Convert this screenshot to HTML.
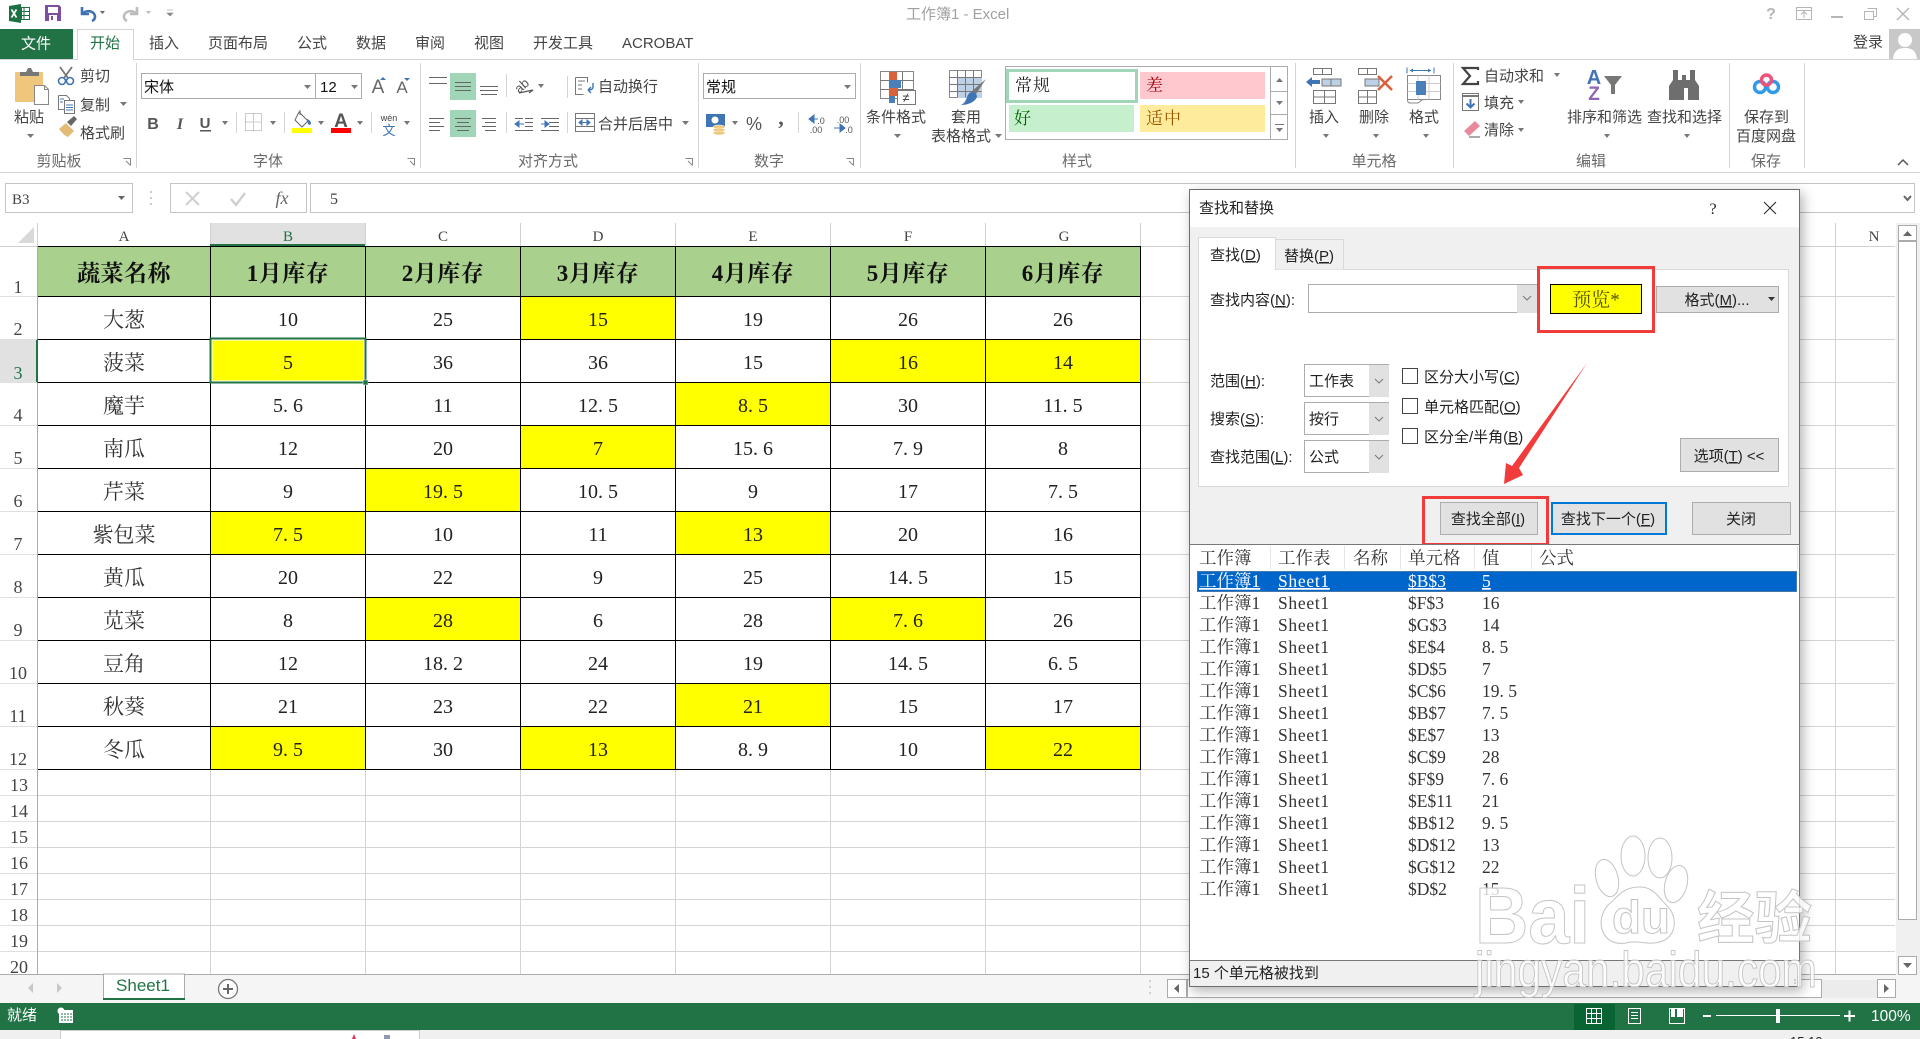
<!DOCTYPE html>
<html lang="zh-CN"><head><meta charset="utf-8"><title>工作簿1 - Excel</title>
<style>
html,body{margin:0;padding:0;background:#fff;width:1920px;height:1039px;overflow:hidden}
svg{display:block;position:absolute;left:0;top:0}
text{white-space:pre}
.r{font:15px "Liberation Sans","Noto Sans CJK SC",sans-serif;fill:#444}
.g{font:15px "Liberation Sans","Noto Sans CJK SC",sans-serif;fill:#6a6a6a}
.d{font:15px "Liberation Sans","Noto Sans CJK SC",sans-serif;fill:#222}
.m{text-anchor:middle}
.h{font:bold 23px "Liberation Serif","Noto Serif CJK SC",serif;fill:#111;text-anchor:middle;letter-spacing:.5px}
.c{font:20px "Liberation Serif","Noto Serif CJK SC",serif;fill:#222;text-anchor:middle}
.z{font:21px "Liberation Serif","Noto Serif CJK SC",serif;fill:#333;text-anchor:middle}
.n{font:18px "Liberation Serif",serif;fill:#444;text-anchor:middle}
.l{font:15px "Liberation Serif",serif;fill:#444;text-anchor:middle}
.v{font:17.5px "Liberation Serif","Noto Serif CJK SC",serif;fill:#333}
.vs{font:17.5px "Liberation Serif","Noto Serif CJK SC",serif;fill:#fff;text-decoration:underline}
.sh{letter-spacing:.7px}
.ln{fill:none;stroke:#d4d4d4;stroke-width:1}
.i{fill:none;stroke:#777;stroke-width:1}
</style></head><body>
<svg width="1920" height="1039" viewBox="0 0 1920 1039" xmlns="http://www.w3.org/2000/svg">
<defs><filter id="ds" x="-5%" y="-5%" width="112%" height="112%"><feDropShadow dx="3" dy="4" stdDeviation="6" flood-color="#000" flood-opacity=".3"/></filter></defs>
<rect width="1920" height="1039" fill="#fff"/>

<!-- Title bar -->
<path d="M9 6l12-2v19l-12-2z" fill="#1d7044"/><rect x="21.500" y="7.500" width="8" height="12" fill="#fff" stroke="#1d7044"/>
<path d="M24 7.500v12M21.500 11.500h8M21.500 15.500h8" stroke="#1d7044" fill="none"/>
<path d="M11.500 9.500l5 8M16.500 9.500l-5 8" stroke="#fff" stroke-width="1.700" fill="none"/>
<path d="M45 5h14l2 2v14h-16z" fill="#7d4f9e"/><rect x="48" y="7" width="10" height="6" fill="#fff"/><rect x="49" y="15" width="8" height="6" fill="#fff"/><rect x="51" y="16" width="2" height="4" fill="#7d4f9e"/>
<path d="M82 7v7h7" fill="none" stroke="#3e72b4" stroke-width="2.600"/><path d="M82 14c5-5 13-3 13 3 0 2-1 3-3 4" fill="none" stroke="#3e72b4" stroke-width="2.600"/>
<path d="M100 11h5l-2.500 3z" fill="#666"/>
<path d="M137 7v7h-7" fill="none" stroke="#bdbdbd" stroke-width="2.600"/><path d="M137 14c-5-5-13-3-13 3 0 2 1 3 3 4" fill="none" stroke="#bdbdbd" stroke-width="2.600"/>
<path d="M146 11h5l-2.500 3z" fill="#bbb"/><path d="M167 10h6M167 13h6l-3 3z" fill="#888" stroke="#888" stroke-width=".6"/>
<text x="906" y="19" class="r" style="fill:#a0a0a0;font-size:15px">工作簿1 - Excel</text>
<text x="1771" y="19" class="r m" style="fill:#b5b5b5;font-size:16px;font-weight:bold">?</text>
<path d="M1796.500 7.500h15v12h-15zM1796.500 10.500h15M1804 18v-6M1801 14.500l3-3 3 3" class="i" style="stroke:#b5b5b5"/>
<rect x="1831" y="16" width="12" height="2" fill="#b5b5b5"/>
<path d="M1867.500 8.500h9v8h-3M1864.500 11.500h9v8h-9z" fill="none" stroke="#b5b5b5"/>
<path d="M1897 8l12 12M1909 8l-12 12" stroke="#b5b5b5" stroke-width="1.400" fill="none"/>

<!-- Tabs -->
<path d="M0 59.500h1920" class="ln"/>
<rect x="0" y="29" width="73" height="30" fill="#217346"/>
<text x="36" y="48.500" class="m" style="font:15px 'Noto Sans CJK SC',sans-serif;fill:#fff">文件</text>
<path d="M77.500 60v-30.500h56v30.500" fill="#fff" stroke="#d4d4d4"/>
<text x="105" y="48" class="r m" style="fill:#217346">开始</text>
<text x="164" y="48" class="r m">插入</text><text x="238" y="48" class="r m">页面布局</text>
<text x="312" y="48" class="r m">公式</text><text x="371" y="48" class="r m">数据</text>
<text x="430" y="48" class="r m">审阅</text><text x="489" y="48" class="r m">视图</text>
<text x="563" y="48" class="r m">开发工具</text><text x="622" y="48" class="r">ACROBAT</text>
<text x="1853" y="47" class="r">登录</text>
<rect x="1889" y="29" width="31" height="30" fill="#c8c8c8"/><circle cx="1905" cy="40" r="7" fill="#fff"/><path d="M1893 59c1-9 6-11 12-11s11 2 12 11z" fill="#fff"/>

<!-- Ribbon separators -->
<path d="M0 172.500h1920" class="ln"/>
<path d="M136.500 63v105M420.500 63v105M698.500 63v105M860.500 63v105M1295.500 63v105M1453.500 63v105M1729.500 63v105M1804.500 63v105" class="ln"/>

<!-- Clipboard group -->
<rect x="15" y="72" width="28" height="30" rx="1" fill="#efc67c"/><path d="M20 76v-4h6l2-4h3l2 4h6v4z" fill="#777"/>
<path d="M34.500 85.500h10l4 4v15h-14z" fill="#fff" stroke="#888"/><path d="M44.500 85.500v4h4" fill="none" stroke="#888"/>
<path d="M60 67l8 11M72 67l-8 11" stroke="#777" stroke-width="1.800" fill="none"/>
<circle cx="62" cy="81" r="3.500" fill="none" stroke="#3f74b5" stroke-width="1.600"/><circle cx="70" cy="81" r="3.500" fill="none" stroke="#3f74b5" stroke-width="1.600"/>
<text x="80" y="81" class="r">剪切</text>
<path d="M58.500 95.500h8l3 3v2M58.500 95.500v14h6" fill="#fff" stroke="#777"/><path d="M64.500 100.500h10v13h-10z" fill="#fff" stroke="#777"/><path d="M66 105h7M66 107.500h7M66 110h7M60 99h4M60 102h3" stroke="#3f74b5" fill="none"/>
<text x="80" y="110" class="r">复制</text><path d="M120 102h7l-3.500 4z" fill="#777"/>
<path d="M59 129l7-6 8 8-6 6c-3-1-6-4-9-8z" fill="#e2bb77"/><path d="M67 122l7-6 3 3-6 7z" fill="#666"/>
<text x="80" y="138" class="r">格式刷</text>
<text x="29" y="122" class="r m">粘贴</text><path d="M27 134h7l-3.500 4z" fill="#777"/>
<text x="59" y="166" class="g m">剪贴板</text>
<path d="M123.500 158.500h7v7M126 161l4 4" fill="none" stroke="#888"/>

<!-- Font group -->
<rect x="141.500" y="73.500" width="174" height="25" fill="#fff" stroke="#ababab"/><rect x="315.500" y="73.500" width="46" height="25" fill="#fff" stroke="#ababab"/>
<text x="144" y="92" style="font:15px 'Noto Sans CJK SC',sans-serif;fill:#111">宋体</text>
<text x="320" y="92" style="font:15px 'Liberation Sans',sans-serif;fill:#111">12</text>
<path d="M304 85h7l-3.500 4zM351 85h7l-3.500 4z" fill="#777"/>
<text x="378" y="93" class="m" style="font:19px 'Liberation Sans',sans-serif;fill:#666">A</text><path d="M380 80h6l-3-3z" fill="#3f74b5"/>
<text x="402" y="93" class="m" style="font:17px 'Liberation Sans',sans-serif;fill:#666">A</text><path d="M404 78h6l-3 3z" fill="#3f74b5"/>
<text x="153" y="129" class="m" style="font:bold 16px 'Liberation Sans',sans-serif;fill:#555">B</text>
<text x="180" y="129" class="m" style="font:italic bold 16px 'Liberation Serif',serif;fill:#555">I</text>
<text x="205" y="128" class="m" style="font:bold 15px 'Liberation Sans',sans-serif;fill:#555">U</text><rect x="200" y="130" width="11" height="1.500" fill="#555"/>
<path d="M222 121h6l-3 4z" fill="#777"/><path d="M236.500 112v21M284.500 112v21M371.500 112v21M506.500 74v23M506.500 112v21M567.500 76v22M567.500 112v21" class="ln"/>
<path d="M245.500 113.500h16v17h-16zM253.500 113.500v17M245.500 122h16" fill="none" stroke="#999" stroke-dasharray="1 1"/>
<path d="M270 121h6l-3 4z" fill="#777"/>
<path d="M299 112l9 9-6 6-7-7zM300 110v5" fill="#fff" stroke="#666"/><path d="M307 119c3 1 4 3 4 5-1 1-2 1-3 0z" fill="#3f74b5"/><rect x="292" y="128" width="20" height="5" fill="#ff0"/>
<path d="M318 121h6l-3 4z" fill="#777"/>
<text x="341" y="127" class="m" style="font:bold 19px 'Liberation Sans',sans-serif;fill:#555">A</text><rect x="331" y="128" width="20" height="5" fill="#f00"/>
<path d="M357 121h6l-3 4z" fill="#777"/>
<text x="389" y="121" class="m" style="font:9px 'Liberation Sans',sans-serif;fill:#444">wén</text><text x="389" y="135" class="m" style="font:13px 'Noto Sans CJK SC',sans-serif;fill:#3f74b5">文</text>
<path d="M404 121h6l-3 4z" fill="#777"/>
<text x="268" y="166" class="g m">字体</text>
<path d="M407.500 158.500h7v7M410 161l4 4" fill="none" stroke="#888"/>

<!-- Alignment -->
<rect x="450" y="73" width="26" height="27" fill="#a0d5b8"/><rect x="450" y="110" width="26" height="27" fill="#a0d5b8"/>
<path d="M429 77.500h18M429 83.500h18" stroke="#666" fill="none"/>
<path d="M455 82.500h16M455 86.500h16M455 90.500h16" stroke="#666" fill="none"/>
<path d="M480 86.500h18M480 90.500h18M481 94.500h16" stroke="#666" fill="none"/>
<path d="M429 118.500h15M429 122.500h11M429 126.500h15M429 130.500h11" stroke="#666" fill="none"/>
<path d="M455 118.500h16M457 122.500h12M455 126.500h16M457 130.500h12" stroke="#666" fill="none"/>
<path d="M482 118.500h14M485 122.500h11M482 126.500h14M485 130.500h11" stroke="#666" fill="none"/>
<text x="522" y="90" class="m" style="font:13px 'Liberation Sans',sans-serif;fill:#555" transform="rotate(-42 522 86)">ab</text><path d="M519 93l14-3-4 3" fill="none" stroke="#555" stroke-width="1.200"/>
<path d="M538 84h6l-3 4z" fill="#777"/>
<path d="M525 118.500h8M525 122.500h8M525 126.500h8M515 130.500h18M515 118.500h8" stroke="#666" fill="none"/><path d="M515 124h9M515 124l4-3v6z" stroke="#3f74b5" fill="#3f74b5"/>
<path d="M549 118.500h10M549 122.500h10M549 126.500h10M541 130.500h18M541 118.500h8" stroke="#666" fill="none"/><path d="M541 124h8M549 124l-4-3v6z" stroke="#3f74b5" fill="#3f74b5"/>
<path d="M575.500 77.500h12v5M575.500 77.500v17h8M578 81h7M578 85h4M578 89h4" fill="none" stroke="#777"/><path d="M593 83v4c0 2-2 3-5 3M588 90l3-3M588 90l3 3" fill="none" stroke="#3f74b5" stroke-width="1.400"/>
<text x="598" y="91.500" class="r">自动换行</text>
<path d="M575.500 113.500h19v18h-19zM575.500 118.500h19M575.500 126.500h19" fill="#fff" stroke="#777"/><path d="M579 122.500h11M579 122.500l3-2.500v5zM590 122.500l-3-2.500v5z" fill="#3f74b5" stroke="#3f74b5"/>
<text x="598" y="129" class="r">合并后居中</text><path d="M682 121h7l-3.500 4z" fill="#777"/>
<text x="548" y="166" class="g m">对齐方式</text>
<path d="M685.500 158.500h7v7M688 161l4 4" fill="none" stroke="#888"/>

<!-- Number -->
<rect x="703.500" y="73.500" width="152" height="25" fill="#fff" stroke="#ababab"/>
<text x="706" y="92" style="font:15px 'Noto Sans CJK SC',sans-serif;fill:#111">常规</text><path d="M844 85h7l-3.500 4z" fill="#777"/>
<rect x="706" y="114" width="19" height="13" fill="#3f74b5"/><circle cx="715" cy="120" r="3.500" fill="#fff"/><ellipse cx="719" cy="127" rx="6" ry="2" fill="#eec77a" stroke="#fff" stroke-width=".5"/><ellipse cx="719" cy="130" rx="6" ry="2" fill="#eec77a" stroke="#fff" stroke-width=".5"/><ellipse cx="719" cy="133" rx="6" ry="2" fill="#eec77a" stroke="#fff" stroke-width=".5"/>
<path d="M732 121h6l-3 4z" fill="#777"/>
<text x="754" y="130" class="m" style="font:18px 'Liberation Sans',sans-serif;fill:#555">%</text>
<text x="781" y="125" class="m" style="font:bold 22px 'Liberation Serif',serif;fill:#555">,</text>
<path d="M798.500 112v21" class="ln"/>
<path d="M809 119l5-4v8zM814 119h4" fill="#3f74b5" stroke="#3f74b5"/><text x="821" y="124" style="font:9px 'Liberation Sans',sans-serif;fill:#555" class="m">.0</text><text x="816" y="133" style="font:9px 'Liberation Sans',sans-serif;fill:#555" class="m">.00</text>
<path d="M845 128l-5-4v8zM834 128h6" fill="#3f74b5" stroke="#3f74b5"/><text x="843" y="123" style="font:9px 'Liberation Sans',sans-serif;fill:#555" class="m">.00</text><text x="849" y="133" style="font:9px 'Liberation Sans',sans-serif;fill:#555" class="m">.0</text>
<text x="769" y="166" class="g m">数字</text>
<path d="M846.500 158.500h7v7M849 161l4 4" fill="none" stroke="#888"/>

<!-- Styles -->
<rect x="880.500" y="71.500" width="33" height="27" fill="#fff" stroke="#888"/><path d="M880.500 80.500h33M880.500 89.500h33M891.500 71.500v27M902.500 71.500v27" class="i"/>
<rect x="889" y="72" width="8" height="8" fill="#d9623b"/><rect x="889" y="80" width="12" height="8" fill="#4a7fb8"/><rect x="889" y="88" width="9" height="8" fill="#d9623b"/><rect x="889" y="96" width="6" height="7" fill="#4a7fb8"/>
<rect x="897.500" y="90.500" width="18" height="14" fill="#fff" stroke="#777"/><text x="906" y="102" class="m" style="font:13px 'Liberation Sans',sans-serif;fill:#333">≠</text>
<text x="896" y="122" class="r m">条件格式</text><path d="M894 134h7l-3.500 4z" fill="#777"/>
<rect x="949.500" y="70.500" width="32" height="27" fill="#fff" stroke="#888"/><rect x="957" y="77" width="25" height="21" fill="#bdd0e6"/><path d="M949.500 77.500h32M949.500 84.500h32M949.500 91.500h32M957.500 70.500v27M965.500 70.500v27M973.500 70.500v27" class="i"/>
<path d="M986 79l-10 15-4-3z" fill="#777"/><path d="M972 92c3 0 5 2 5 5-2 5-9 8-16 8 4-2 5-5 6-8 1-3 3-5 5-5z" fill="#3f74b5"/>
<text x="966" y="122" class="r m">套用</text><text x="961" y="141" class="r m">表格格式</text><path d="M995 134h7l-3.500 4z" fill="#777"/>
<rect x="1005.500" y="66.500" width="282" height="73" fill="#fff" stroke="#ababab"/>
<rect x="1007.500" y="70.500" width="129" height="31" fill="#fff" stroke="#a0d5b8" stroke-width="3"/>
<text x="1015" y="91" style="font:17px 'Noto Serif CJK SC',serif;fill:#222;letter-spacing:1px">常规</text>
<rect x="1140" y="72" width="125" height="27" fill="#ffc7ce"/><text x="1146" y="91" style="font:17px 'Noto Serif CJK SC',serif;fill:#9c0006">差</text>
<rect x="1009" y="105" width="125" height="27" fill="#c6efce"/><text x="1014" y="124" style="font:17px 'Noto Serif CJK SC',serif;fill:#006100">好</text>
<rect x="1140" y="105" width="125" height="27" fill="#ffeb9c"/><text x="1146" y="124" style="font:17px 'Noto Serif CJK SC',serif;fill:#9c5700;letter-spacing:1px">适中</text>
<path d="M1270.500 66.500v73M1270.500 91.500h17M1270.500 114.500h17" class="i" style="stroke:#ababab"/>
<path d="M1276 82l3.500-4 3.500 4zM1276 101h7l-3.500 4zM1276 128h7l-3.500 4z" fill="#777" stroke="none"/><path d="M1275 124.500h9" stroke="#777"/>
<text x="1077" y="166" class="g m">样式</text>

<!-- Cells -->
<path d="M1313.500 68.500h18v6h-18zM1322.500 68.500v6M1313.500 90.500h22v13h-22zM1324.500 90.500v13M1313.500 97h22" class="i"/>
<rect x="1322" y="79" width="19" height="7" fill="#bdd0e6" stroke="#777"/><path d="M1331 79v7" stroke="#777"/>
<path d="M1306 82l6-5v3h8v4h-8v3z" fill="#3f74b5"/>
<text x="1324" y="122" class="r m">插入</text><path d="M1323 134h6l-3 4z" fill="#777"/>
<path d="M1358.500 68.500h18v6h-18zM1367.500 68.500v6M1358.500 90.500h18v13h-18zM1367.500 90.500v13M1358.500 97h18" class="i"/>
<rect x="1365" y="79" width="14" height="7" fill="#bdd0e6" stroke="#777"/>
<path d="M1378 76l14 14M1392 76l-14 14" stroke="#d9623b" stroke-width="2.600" fill="none"/>
<text x="1374" y="122" class="r m">删除</text><path d="M1373 134h6l-3 4z" fill="#777"/>
<path d="M1407 67.500v6M1434 67.500v6M1410 70.500h21" stroke="#3f74b5" fill="none"/><path d="M1410 70.500l3-2v4zM1431 70.500l-3-2v4z" fill="#3f74b5"/>
<rect x="1407.500" y="75.500" width="33" height="24" fill="#fff" stroke="#888"/><path d="M1418 75.500v24M1429 75.500v24M1407.500 83.500h33M1407.500 91.500h33" stroke="#ccc" fill="none"/><rect x="1416" y="81" width="10" height="14" fill="#4a7fb8"/>
<path d="M1407.500 100c0 3 2 3 4 3h6c2 0 3-3 5-3" fill="none" stroke="#888"/>
<text x="1424" y="122" class="r m">格式</text><path d="M1423 134h6l-3 4z" fill="#777"/>
<text x="1374" y="166" class="g m" style="font-size:15px">单元格</text>

<!-- Editing -->
<path d="M1478 70v-2h-15l7 8-7 8h15v-3" fill="none" stroke="#444" stroke-width="2.200"/>
<text x="1484" y="81" class="r">自动求和</text><path d="M1554 73h6l-3 4z" fill="#777"/>
<rect x="1462.500" y="93.500" width="16" height="17" fill="#fff" stroke="#777"/><path d="M1462.500 96h16" stroke="#777" stroke-width="2"/><path d="M1470.500 99v8M1466.500 103.500l4 4 4-4" stroke="#3f74b5" stroke-width="2" fill="none"/>
<text x="1484" y="108" class="r">填充</text><path d="M1518 100h6l-3 4z" fill="#777"/>
<path d="M1464 131l11-10 5 5-11 10z" fill="#e8899b"/><path d="M1469 137h11" stroke="#555"/>
<text x="1484" y="135" class="r">清除</text><path d="M1518 128h6l-3 4z" fill="#777"/>
<text x="1594" y="84" class="m" style="font:bold 20px 'Liberation Sans',sans-serif;fill:#3f74b5">A</text><text x="1594" y="100" class="m" style="font:bold 19px 'Liberation Sans',sans-serif;fill:#8e64b5">Z</text>
<path d="M1604 76h18l-7 9v9h-4v-9z" fill="#777"/>
<text x="1604.500" y="122" class="r m">排序和筛选</text><path d="M1604 134h6l-3 4z" fill="#777"/>
<path d="M1669 100v-14l4-6v-10h5v10h4v-5h4v5h4v-10h5v10l4 6v14h-11v-12h-4v12z" fill="#6e6e6e"/>
<text x="1684.500" y="122" class="r m">查找和选择</text><path d="M1684 134h6l-3 4z" fill="#777"/>
<text x="1591" y="166" class="g m">编辑</text>
<circle cx="1760" cy="87" r="5.500" fill="none" stroke="#2f9be8" stroke-width="3.400"/><circle cx="1773" cy="87" r="5.500" fill="none" stroke="#2f9be8" stroke-width="3.400"/><circle cx="1766.500" cy="80" r="5" fill="none" stroke="#f0507a" stroke-width="3.400"/>
<text x="1766.500" y="122" class="r m">保存到</text><text x="1766" y="141" class="r m">百度网盘</text>
<text x="1766" y="166" class="g m">保存</text>
<path d="M1898 165l5-5 5 5" fill="none" stroke="#555" stroke-width="1.500"/>

<!-- Formula bar -->
<rect x="5.500" y="183.500" width="127" height="29" fill="#fff" stroke="#c4c4c4"/>
<text x="12" y="204" style="font:15px 'Liberation Serif',serif;fill:#444">B3</text><path d="M118 196h7l-3.500 4z" fill="#666"/>
<path d="M151 191v2M151 197v2M151 203v2" stroke="#999"/>
<rect x="170.500" y="183.500" width="136" height="29" fill="#fff" stroke="#c4c4c4"/><rect x="310.500" y="183.500" width="1604" height="29" fill="#fff" stroke="#c4c4c4"/>
<path d="M186 192l13 13M199 192l-13 13" stroke="#cfcfcf" stroke-width="2" fill="none"/>
<path d="M231 199l5 6 9-12" stroke="#cfcfcf" stroke-width="2.400" fill="none"/>
<text x="282" y="204" class="m" style="font:italic 18px 'Liberation Serif',serif;fill:#666">fx</text>
<text x="330" y="204" style="font:16px 'Liberation Serif',serif;fill:#444">5</text>
<path d="M1904 196l3.500 4 3.500-4" fill="none" stroke="#666" stroke-width="2"/>

<!-- Grid headers -->
<rect x="210" y="223" width="155" height="23" fill="#e1e1e1"/>
<rect x="0" y="339" width="37" height="44" fill="#e1e1e1"/>
<path d="M34 227v16h-16z" fill="#d9d9d9"/>
<path d="M37.500 223v751M0 246.500h1895M210.500 223v23M365.500 223v23M520.500 223v23M675.500 223v23M830.500 223v23M985.500 223v23M1140.500 223v23M1835.500 223v23" fill="none" stroke="#d0d0d0"/>
<path d="M37.500 246v728" stroke="#ababab" fill="none"/>
<text x="124" y="241" class="l">A</text><text x="288" y="241" class="l" style="fill:#217346">B</text><text x="443" y="241" class="l">C</text><text x="598" y="241" class="l">D</text><text x="753" y="241" class="l">E</text><text x="908" y="241" class="l">F</text><text x="1064" y="241" class="l">G</text><text x="1874" y="241" class="l">N</text>
<rect x="210" y="244" width="155" height="2" fill="#217346"/>
<rect x="36" y="339" width="2" height="44" fill="#217346"/>

<!-- Faint grid -->
<path d="M0 296.500h37M0 339.500h37M0 382.500h37M0 425.500h37M0 468.500h37M0 511.500h37M0 554.500h37M0 597.500h37M0 640.500h37M0 683.500h37M0 726.500h37M0 769.500h37M0 795.500h37M0 821.500h37M0 847.500h37M0 873.500h37M0 899.500h37M0 925.500h37M0 951.500h37" stroke="#e0e0e0" fill="none"/>
<path d="M1140 296.500h755M1140 339.500h755M1140 382.500h755M1140 425.500h755M1140 468.500h755M1140 511.500h755M1140 554.500h755M1140 597.500h755M1140 640.500h755M1140 683.500h755M1140 726.500h755M38 795.500h1857M38 821.500h1857M38 847.500h1857M38 873.500h1857M38 899.500h1857M38 925.500h1857M38 951.500h1857M1140 769.500h755" stroke="#d4d4d4" fill="none"/>
<path d="M210.500 769v205M365.500 769v205M520.500 769v205M675.500 769v205M830.500 769v205M985.500 769v205M1140.500 769v205M1835.500 246v728" stroke="#d4d4d4" fill="none"/>

<!-- Fills -->
<g fill="#aad08e"><rect x="38" y="246" width="1102" height="50"/></g>
<g fill="#ffff00">
<rect x="520" y="296" width="155" height="43"/><rect x="210" y="339" width="155" height="44"/><rect x="830" y="339" width="310" height="44"/>
<rect x="675" y="382" width="155" height="43"/><rect x="520" y="425" width="155" height="43"/><rect x="365" y="468" width="155" height="43"/>
<rect x="210" y="511" width="155" height="43"/><rect x="675" y="511" width="155" height="43"/><rect x="365" y="597" width="155" height="43"/>
<rect x="830" y="597" width="155" height="43"/><rect x="675" y="683" width="155" height="43"/><rect x="210" y="726" width="155" height="43"/>
<rect x="520" y="726" width="155" height="43"/><rect x="985" y="726" width="155" height="43"/>
</g>
<path d="M38 246.500h1102M38 296.500h1102M38 339.500h1102M38 382.500h1102M38 425.500h1102M38 468.500h1102M38 511.500h1102M38 554.500h1102M38 597.500h1102M38 640.500h1102M38 683.500h1102M38 726.500h1102M38 769.500h1102M210.500 246v524M365.500 246v524M520.500 246v524M675.500 246v524M830.500 246v524M985.500 246v524M1140.500 246v524" stroke="#000" fill="none"/>
<rect x="210.500" y="338.500" width="155" height="44" fill="none" stroke="#217346" stroke-width="2"/>
<rect x="212" y="340" width="152" height="41" fill="none" stroke="#fff"/>
<rect x="363" y="380" width="5" height="5" fill="#217346" stroke="#fff" stroke-width=".5"/>

<!-- Row numbers -->
<text x="18" y="293" class="n">1</text><text x="18" y="335" class="n">2</text><text x="18" y="379" class="n" style="fill:#217346">3</text><text x="18" y="421" class="n">4</text><text x="18" y="464" class="n">5</text><text x="18" y="507" class="n">6</text><text x="18" y="550" class="n">7</text><text x="18" y="593" class="n">8</text><text x="18" y="636" class="n">9</text><text x="18" y="679" class="n">10</text><text x="18" y="722" class="n">11</text><text x="18" y="765" class="n">12</text>
<text x="19" y="791" class="n">13</text><text x="19" y="817" class="n">14</text><text x="19" y="843" class="n">15</text><text x="19" y="869" class="n">16</text><text x="19" y="895" class="n">17</text><text x="19" y="921" class="n">18</text><text x="19" y="947" class="n">19</text><text x="19" y="973" class="n">20</text>

<!-- Header row text -->
<text x="124" y="281" class="h">蔬菜名称</text><text x="288" y="281" class="h">1月库存</text><text x="443" y="281" class="h">2月库存</text><text x="598" y="281" class="h">3月库存</text><text x="753" y="281" class="h">4月库存</text><text x="908" y="281" class="h">5月库存</text><text x="1063" y="281" class="h">6月库存</text>

<!-- Data -->
<text x="124" y="327" class="z">大葱</text><text x="288" y="326" class="c">10</text><text x="443" y="326" class="c">25</text><text x="598" y="326" class="c">15</text><text x="753" y="326" class="c">19</text><text x="908" y="326" class="c">26</text><text x="1063" y="326" class="c">26</text>
<text x="124" y="370" class="z">菠菜</text><text x="288" y="369" class="c">5</text><text x="443" y="369" class="c">36</text><text x="598" y="369" class="c">36</text><text x="753" y="369" class="c">15</text><text x="908" y="369" class="c">16</text><text x="1063" y="369" class="c">14</text>
<text x="124" y="413" class="z">魔芋</text><text x="288" y="412" class="c">5. 6</text><text x="443" y="412" class="c">11</text><text x="598" y="412" class="c">12. 5</text><text x="753" y="412" class="c">8. 5</text><text x="908" y="412" class="c">30</text><text x="1063" y="412" class="c">11. 5</text>
<text x="124" y="456" class="z">南瓜</text><text x="288" y="455" class="c">12</text><text x="443" y="455" class="c">20</text><text x="598" y="455" class="c">7</text><text x="753" y="455" class="c">15. 6</text><text x="908" y="455" class="c">7. 9</text><text x="1063" y="455" class="c">8</text>
<text x="124" y="499" class="z">芹菜</text><text x="288" y="498" class="c">9</text><text x="443" y="498" class="c">19. 5</text><text x="598" y="498" class="c">10. 5</text><text x="753" y="498" class="c">9</text><text x="908" y="498" class="c">17</text><text x="1063" y="498" class="c">7. 5</text>
<text x="124" y="542" class="z">紫包菜</text><text x="288" y="541" class="c">7. 5</text><text x="443" y="541" class="c">10</text><text x="598" y="541" class="c">11</text><text x="753" y="541" class="c">13</text><text x="908" y="541" class="c">20</text><text x="1063" y="541" class="c">16</text>
<text x="124" y="585" class="z">黄瓜</text><text x="288" y="584" class="c">20</text><text x="443" y="584" class="c">22</text><text x="598" y="584" class="c">9</text><text x="753" y="584" class="c">25</text><text x="908" y="584" class="c">14. 5</text><text x="1063" y="584" class="c">15</text>
<text x="124" y="628" class="z">苋菜</text><text x="288" y="627" class="c">8</text><text x="443" y="627" class="c">28</text><text x="598" y="627" class="c">6</text><text x="753" y="627" class="c">28</text><text x="908" y="627" class="c">7. 6</text><text x="1063" y="627" class="c">26</text>
<text x="124" y="671" class="z">豆角</text><text x="288" y="670" class="c">12</text><text x="443" y="670" class="c">18. 2</text><text x="598" y="670" class="c">24</text><text x="753" y="670" class="c">19</text><text x="908" y="670" class="c">14. 5</text><text x="1063" y="670" class="c">6. 5</text>
<text x="124" y="714" class="z">秋葵</text><text x="288" y="713" class="c">21</text><text x="443" y="713" class="c">23</text><text x="598" y="713" class="c">22</text><text x="753" y="713" class="c">21</text><text x="908" y="713" class="c">15</text><text x="1063" y="713" class="c">17</text>
<text x="124" y="757" class="z">冬瓜</text><text x="288" y="756" class="c">9. 5</text><text x="443" y="756" class="c">30</text><text x="598" y="756" class="c">13</text><text x="753" y="756" class="c">8. 9</text><text x="908" y="756" class="c">10</text><text x="1063" y="756" class="c">22</text>

<!-- Vertical scrollbar -->
<rect x="1896" y="223" width="24" height="752" fill="#f0f0f0"/>
<rect x="1898.500" y="225.500" width="18" height="15" fill="#fff" stroke="#ababab"/><path d="M1903 236l4.500-5 4.500 5z" fill="#666"/>
<rect x="1898.500" y="241.500" width="18" height="678" fill="#fff" stroke="#ababab"/>
<rect x="1898.500" y="956.500" width="18" height="18" fill="#fff" stroke="#ababab"/><path d="M1903 963l4.500 5 4.500-5z" fill="#666"/>

<!-- Sheet tabs -->
<rect x="0" y="975" width="1920" height="28" fill="#f5f5f5"/><path d="M0 974.500h1896" stroke="#ababab"/>
<path d="M33 983v10l-5-5z" fill="#c8c8c8"/><path d="M57 983v10l5-5z" fill="#c8c8c8"/>
<path d="M103.500 999v-25h81v25" fill="#fff" stroke="#ababab"/><rect x="103" y="998" width="82" height="2" fill="#217346"/>
<text x="143" y="991" class="m" style="font:17px 'Liberation Sans',sans-serif;fill:#217346">Sheet1</text>
<circle cx="228" cy="989" r="9.500" fill="#fff" stroke="#777" stroke-width="1.300"/><path d="M223 989h10M228 984v10" stroke="#666" stroke-width="2"/>
<path d="M1150 980v2M1150 986v2M1150 992v2" stroke="#aaa"/>
<rect x="1167.500" y="979.500" width="19" height="18" fill="#fff" stroke="#ababab"/><path d="M1179 984v9l-5-4.500z" fill="#666"/>
<rect x="1187.500" y="979.500" width="634" height="18" fill="#fff" stroke="#ababab"/>
<rect x="1822" y="980" width="55" height="18" fill="#ececec"/>
<rect x="1877.500" y="979.500" width="18" height="18" fill="#fff" stroke="#ababab"/><path d="M1884 984v9l5-4.500z" fill="#666"/>

<!-- Status bar -->
<rect x="0" y="1003" width="1920" height="27" fill="#217346"/>
<text x="7" y="1020" style="font:15px 'Noto Sans CJK SC',sans-serif;fill:#fff">就绪</text>
<rect x="59" y="1010" width="14" height="13" fill="#fff"/><circle cx="61" cy="1011" r="3.500" fill="#fff"/><path d="M61 1014h11M61 1017h11M61 1020h11" stroke="#217346" stroke-dasharray="2 1"/>
<rect x="1574" y="1004" width="41" height="26" fill="#0a6332"/>
<path d="M1586.500 1008.500h15v15h-15zM1591.500 1008.500v15M1596.500 1008.500v15M1586.500 1013.500h15M1586.500 1018.500h15" fill="none" stroke="#fff"/>
<path d="M1628.500 1008.500h12v15h-12zM1631 1012.500h7M1631 1015.500h7M1631 1018.500h7" fill="none" stroke="#fff"/>
<rect x="1669.500" y="1008.500" width="15" height="15" fill="none" stroke="#fff"/><rect x="1671" y="1009" width="4" height="8" fill="#fff"/><rect x="1677" y="1009" width="6" height="8" fill="#fff"/>
<rect x="1703" y="1015" width="8" height="2" fill="#fff"/><rect x="1716" y="1015" width="124" height="1" fill="#fff"/><rect x="1776" y="1009" width="4" height="14" fill="#fff"/>
<path d="M1844 1016h11M1849.500 1010.500v11" stroke="#fff" stroke-width="2"/>
<text x="1871" y="1021" style="font:15.500px 'Liberation Sans',sans-serif;fill:#fff">100%</text>

<!-- Bottom strip -->
<rect x="0" y="1030" width="1920" height="9" fill="#f0f0f0"/>
<rect x="60.500" y="1030.500" width="359" height="9" fill="#fff" stroke="#ccc"/>
<path d="M352 1039l2-5 2 5z" fill="#e03060"/><rect x="384" y="1035" width="6" height="4" fill="#8a9ab0"/>
<text x="1790" y="1046" style="font:13px 'Liberation Sans',sans-serif;fill:#222">15:10</text>

<!-- Dialog -->
<rect x="1189.500" y="189.500" width="610" height="797" fill="#f0f0f0" stroke="#6e6e6e" filter="url(#ds)"/>
<rect x="1190" y="190" width="609" height="37" fill="#fff"/>
<text x="1199" y="213" class="d">查找和替换</text>
<text x="1713" y="214" class="m" style="font:16px 'Liberation Serif',serif;fill:#222">?</text>
<path d="M1764 202l12 12M1776 202l-12 12" stroke="#222" fill="none"/>
<rect x="1198.500" y="269.500" width="590" height="217" fill="#fff" stroke="#d9d9d9"/>
<path d="M1275.500 269.500v-30h68v30" fill="#f0f0f0" stroke="#d9d9d9"/>
<path d="M1198.500 270v-32.500h77v32.500" fill="#fff" stroke="#d9d9d9"/><rect x="1199" y="268" width="76" height="3" fill="#fff"/>
<text x="1210" y="260" class="d">查找(<tspan text-decoration="underline">D</tspan>)</text>
<text x="1284" y="261" class="d">替换(<tspan text-decoration="underline">P</tspan>)</text>
<text x="1210" y="305" class="d">查找内容(<tspan text-decoration="underline">N</tspan>):</text>
<rect x="1308.500" y="284.500" width="228" height="28" fill="#fff" stroke="#acacac"/><rect x="1517" y="285" width="20" height="28" fill="#e1e1e1"/><path d="M1523 296l4 4 4-4" fill="none" stroke="#777"/>
<rect x="1550.500" y="284.500" width="91" height="29" fill="#ff0" stroke="#000"/>
<text x="1596" y="306" class="m" style="font:19px 'Liberation Serif','Noto Serif CJK SC',serif;fill:#555500">预览*</text>
<rect x="1656.500" y="286.500" width="122" height="26" fill="#e1e1e1" stroke="#adadad"/>
<text x="1717" y="305" class="d m">格式(<tspan text-decoration="underline">M</tspan>)...</text><path d="M1768 297h7l-3.500 4z" fill="#333"/>
<rect x="1538.500" y="267.500" width="115" height="64" fill="none" stroke="#f23c3c" stroke-width="3"/>

<text x="1210" y="386" class="d">范围(<tspan text-decoration="underline">H</tspan>):</text>
<text x="1210" y="424" class="d">搜索(<tspan text-decoration="underline">S</tspan>):</text>
<text x="1210" y="462" class="d">查找范围(<tspan text-decoration="underline">L</tspan>):</text>
<rect x="1304.500" y="364.500" width="84" height="32" fill="#fff" stroke="#acacac"/><rect x="1369" y="365" width="20" height="32" fill="#e1e1e1"/><path d="M1375 379l4 4 4-4" fill="none" stroke="#777"/>
<rect x="1304.500" y="402.500" width="84" height="32" fill="#fff" stroke="#acacac"/><rect x="1369" y="403" width="20" height="32" fill="#e1e1e1"/><path d="M1375 417l4 4 4-4" fill="none" stroke="#777"/>
<rect x="1304.500" y="440.500" width="84" height="32" fill="#fff" stroke="#acacac"/><rect x="1369" y="441" width="20" height="32" fill="#e1e1e1"/><path d="M1375 455l4 4 4-4" fill="none" stroke="#777"/>
<text x="1309" y="386" class="d">工作表</text><text x="1309" y="424" class="d">按行</text><text x="1309" y="462" class="d">公式</text>
<rect x="1402.500" y="368.500" width="15" height="15" fill="#fff" stroke="#444"/><rect x="1402.500" y="398.500" width="15" height="15" fill="#fff" stroke="#444"/><rect x="1402.500" y="428.500" width="15" height="15" fill="#fff" stroke="#444"/>
<text x="1424" y="382" class="d">区分大小写(<tspan text-decoration="underline">C</tspan>)</text>
<text x="1424" y="412" class="d">单元格匹配(<tspan text-decoration="underline">O</tspan>)</text>
<text x="1424" y="442" class="d">区分全/半角(<tspan text-decoration="underline">B</tspan>)</text>
<rect x="1680.500" y="438.500" width="98" height="33" fill="#e1e1e1" stroke="#adadad"/>
<text x="1729" y="461" class="d m">选项(<tspan text-decoration="underline">T</tspan>) &lt;&lt;</text>
<rect x="1440.500" y="502.500" width="97" height="32" fill="#e1e1e1" stroke="#adadad"/><text x="1488" y="524" class="d m">查找全部(<tspan text-decoration="underline">I</tspan>)</text>
<rect x="1552" y="503" width="114" height="31" fill="#e1e1e1" stroke="#0078d7" stroke-width="2"/><text x="1608" y="524" class="d m">查找下一个(<tspan text-decoration="underline">F</tspan>)</text>
<rect x="1692.500" y="502.500" width="98" height="32" fill="#e1e1e1" stroke="#adadad"/><text x="1741" y="524" class="d m">关闭</text>
<rect x="1423.500" y="497.500" width="124" height="47" fill="none" stroke="#f23c3c" stroke-width="3"/>
<path d="M1587 363L1519 468l4 7-19 9 2-21 6 3z" fill="#f23c3c"/>

<!-- Results -->
<rect x="1189.500" y="544.500" width="610" height="416" fill="#fff" stroke="#777"/>
<rect x="1190" y="961" width="609" height="25" fill="#f0f0f0"/>
<path d="M1270.500 546v23M1344.500 546v23M1400.500 546v23M1474.500 546v23M1531.500 546v23M1797.500 546v23" stroke="#e5e5e5" fill="none"/>
<text x="1199" y="564" class="v">工作簿</text><text x="1278" y="564" class="v">工作表</text><text x="1353" y="564" class="v">名称</text><text x="1408" y="564" class="v">单元格</text><text x="1482" y="564" class="v">值</text><text x="1539" y="564" class="v">公式</text>
<rect x="1197" y="571" width="600" height="21" fill="#0066cc"/><rect x="1197.500" y="571.500" width="599" height="20" fill="none" stroke="#e8a050" stroke-dasharray="1 1" opacity=".6"/>
<text x="1199" y="587" class="vs">工作簿1</text><text x="1278" y="587" class="vs sh">Sheet1</text><text x="1408" y="587" class="vs">$B$3</text><text x="1482" y="587" class="vs">5</text>
<text x="1199" y="609" class="v">工作簿1</text><text x="1278" y="609" class="v sh">Sheet1</text><text x="1408" y="609" class="v">$F$3</text><text x="1482" y="609" class="v">16</text>
<text x="1199" y="631" class="v">工作簿1</text><text x="1278" y="631" class="v sh">Sheet1</text><text x="1408" y="631" class="v">$G$3</text><text x="1482" y="631" class="v">14</text>
<text x="1199" y="653" class="v">工作簿1</text><text x="1278" y="653" class="v sh">Sheet1</text><text x="1408" y="653" class="v">$E$4</text><text x="1482" y="653" class="v">8. 5</text>
<text x="1199" y="675" class="v">工作簿1</text><text x="1278" y="675" class="v sh">Sheet1</text><text x="1408" y="675" class="v">$D$5</text><text x="1482" y="675" class="v">7</text>
<text x="1199" y="697" class="v">工作簿1</text><text x="1278" y="697" class="v sh">Sheet1</text><text x="1408" y="697" class="v">$C$6</text><text x="1482" y="697" class="v">19. 5</text>
<text x="1199" y="719" class="v">工作簿1</text><text x="1278" y="719" class="v sh">Sheet1</text><text x="1408" y="719" class="v">$B$7</text><text x="1482" y="719" class="v">7. 5</text>
<text x="1199" y="741" class="v">工作簿1</text><text x="1278" y="741" class="v sh">Sheet1</text><text x="1408" y="741" class="v">$E$7</text><text x="1482" y="741" class="v">13</text>
<text x="1199" y="763" class="v">工作簿1</text><text x="1278" y="763" class="v sh">Sheet1</text><text x="1408" y="763" class="v">$C$9</text><text x="1482" y="763" class="v">28</text>
<text x="1199" y="785" class="v">工作簿1</text><text x="1278" y="785" class="v sh">Sheet1</text><text x="1408" y="785" class="v">$F$9</text><text x="1482" y="785" class="v">7. 6</text>
<text x="1199" y="807" class="v">工作簿1</text><text x="1278" y="807" class="v sh">Sheet1</text><text x="1408" y="807" class="v">$E$11</text><text x="1482" y="807" class="v">21</text>
<text x="1199" y="829" class="v">工作簿1</text><text x="1278" y="829" class="v sh">Sheet1</text><text x="1408" y="829" class="v">$B$12</text><text x="1482" y="829" class="v">9. 5</text>
<text x="1199" y="851" class="v">工作簿1</text><text x="1278" y="851" class="v sh">Sheet1</text><text x="1408" y="851" class="v">$D$12</text><text x="1482" y="851" class="v">13</text>
<text x="1199" y="873" class="v">工作簿1</text><text x="1278" y="873" class="v sh">Sheet1</text><text x="1408" y="873" class="v">$G$12</text><text x="1482" y="873" class="v">22</text>
<text x="1199" y="895" class="v">工作簿1</text><text x="1278" y="895" class="v sh">Sheet1</text><text x="1408" y="895" class="v">$D$2</text><text x="1482" y="895" class="v">15</text>
<text x="1193" y="978" class="d">15 个单元格被找到</text>
<path d="M1794 983h2M1797 983h2M1797 980h2M1797 977h2M1794 980h2" stroke="#aaa"/>

<!-- Watermark -->
<g fill="#fff" fill-opacity=".78" stroke="#c4c4c4" stroke-width="1">
<ellipse cx="1633" cy="856" rx="12" ry="20"/><ellipse cx="1660" cy="858" rx="12" ry="20"/><ellipse cx="1607" cy="878" rx="11" ry="19" transform="rotate(-15 1607 878)"/><ellipse cx="1676" cy="884" rx="11" ry="19" transform="rotate(15 1676 884)"/>
<path d="M1640 887c14 0 20 12 28 20 10 10 10 34-14 36-10 1-18-3-28 0-24 4-32-22-18-38 10-8 14-18 32-18z"/>
<text x="1475" y="943" textLength="115" lengthAdjust="spacingAndGlyphs" style="font:bold 80px 'Liberation Sans',sans-serif">Bai</text>
<text x="1612" y="933" textLength="58" lengthAdjust="spacingAndGlyphs" style="font:bold 46px 'Liberation Sans',sans-serif">du</text>
<text x="1697" y="938" textLength="115" lengthAdjust="spacingAndGlyphs" style="font:bold 57px 'Noto Sans CJK SC',sans-serif">经验</text>
<text x="1475" y="987" textLength="342" lengthAdjust="spacingAndGlyphs" style="font:50px 'Liberation Sans',sans-serif">jingyan.baidu.com</text>
</g>
</svg>
</body></html>
